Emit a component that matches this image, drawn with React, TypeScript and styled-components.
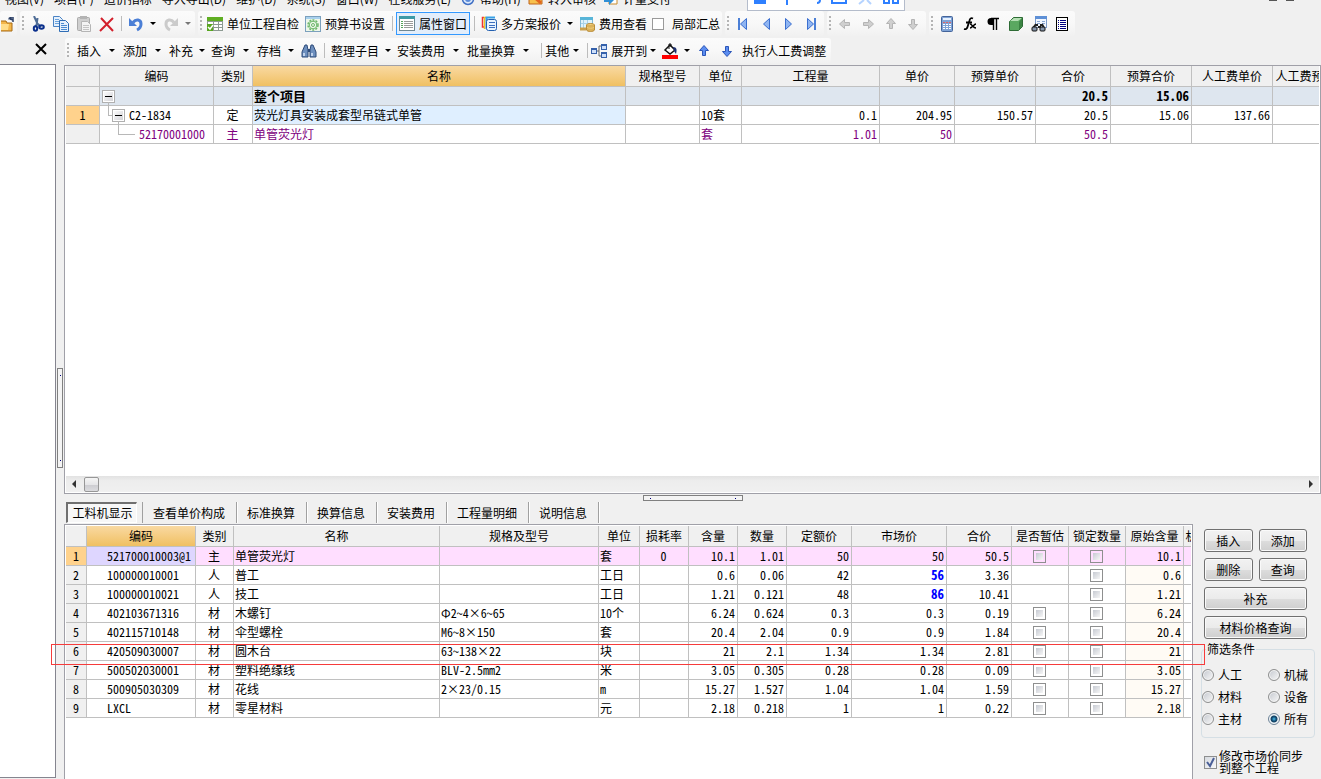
import React from 'react';
import styled, { createGlobalStyle, css } from 'styled-components';

const GlobalStyle = createGlobalStyle`
  *, *::before, *::after { box-sizing: border-box; }
  html, body { margin: 0; padding: 0; }
  body {
    background: #f0f0f0;
    color: #000;
    font-family: 'Noto Sans CJK SC', sans-serif;
    font-size: 12px;
    line-height: 16px;
    overflow: hidden;
  }
  button, input { font: inherit; color: inherit; margin: 0; }
`;

const gridFont = "'Noto Sans Mono CJK SC', 'Noto Sans CJK SC', monospace";

/* ---------- shell ---------- */

const Shell = styled.div`
  display: flex;
  flex-direction: column;
  height: 100vh;
  overflow: hidden;
`;

const MenuBar = styled.nav`
  display: flex;
  align-items: flex-end;
  flex: none;
  height: 11px;
  padding: 0 0 4px 5px;
  overflow: hidden;
  position: relative;
`;

const MenuItem = styled.button<{ $icon?: boolean }>`
  display: flex;
  align-items: center;
  gap: 5px;
  flex: none;
  height: 16px;
  padding: 0;
  margin-right: ${p => (p.$icon ? 7 : 10)}px;
  border: 0;
  background: none;
  white-space: nowrap;
`;

const WindowMarks = styled.div`
  position: absolute;
  top: 0;
  right: 27px;
  display: flex;
  gap: 9px;
  i { width: 8px; height: 1px; background: #555; }
`;

const FloatBar = styled.div`
  position: absolute;
  top: 0;
  left: 747px;
  display: flex;
  gap: 10px;
  width: 158px;
  height: 11px;
  padding-left: 5px;
  border: 1px solid #b4bccb;
  border-top: 0;
  background: #fff;
`;

const ToolRow = styled.div<{ $last?: boolean }>`
  display: flex;
  flex: none;
  gap: 3px;
  height: ${p => (p.$last ? 26 : 27)}px;
`;

const Group = styled.div`
  display: flex;
  align-items: center;
  flex: none;
  height: 25px;
  padding-right: 2px;
  border-radius: 3px;
  background: linear-gradient(#fbfbfb, #f8f8f8 50%, #f1f1f1);
`;

const Grip = styled.span`
  width: 6px;
  height: 15px;
  flex: none;
  background:
    linear-gradient(#b4b4b4, #b4b4b4) 2px 0 / 2px 2px no-repeat,
    linear-gradient(#b4b4b4, #b4b4b4) 2px 4px / 2px 2px no-repeat,
    linear-gradient(#b4b4b4, #b4b4b4) 2px 8px / 2px 2px no-repeat,
    linear-gradient(#b4b4b4, #b4b4b4) 2px 12px / 2px 2px no-repeat;
`;

const ToolButton = styled.button<{ $w?: number; $on?: boolean; $bare?: boolean }>`
  display: flex;
  align-items: center;
  justify-content: center;
  gap: 4px;
  flex: none;
  height: 23px;
  width: ${p => (p.$w ? `${p.$w}px` : 'auto')};
  padding: 0 ${p => (p.$w || p.$bare ? 0 : p.$on ? 2 : 3)}px;
  border: ${p => (p.$on ? '1px solid #3399ff' : '0')};
  background: ${p => (p.$on ? '#e3eefb' : 'none')};
  white-space: nowrap;
`;

const CaretButton = styled.button<{ $w: number; $dim?: boolean }>`
  display: flex;
  align-items: center;
  justify-content: center;
  flex: none;
  width: ${p => p.$w}px;
  height: 23px;
  padding: 0;
  border: 0;
  background: none;
  &::before {
    content: '';
    border: 3px solid transparent;
    border-top-color: ${p => (p.$dim ? '#777' : '#000')};
    border-bottom: 0;
  }
`;

const Separator = styled.span<{ $w: number }>`
  flex: none;
  width: ${p => p.$w}px;
  height: 15px;
  background: linear-gradient(#bcbcbc, #bcbcbc) center / 1px 100% no-repeat;
`;

const ToolCheck = styled.label`
  display: flex;
  align-items: center;
  gap: 8px;
  padding-left: 2px;
  white-space: nowrap;
  input {
    appearance: none;
    width: 12px;
    height: 12px;
    border: 1px solid #9a9a9a;
    background: #fff;
  }
`;

const DockHead = styled.div`
  display: flex;
  align-items: center;
  justify-content: flex-end;
  flex: none;
  width: 62px;
  padding: 0 15px 4px 0;
`;

const CloseButton = styled.button`
  display: flex;
  padding: 0;
  border: 0;
  background: none;
`;

const EditItems = styled.div`
  display: flex;
  align-items: center;
  padding-left: 6px;
`;

/* ---------- workspace ---------- */

const Workspace = styled.div`
  display: flex;
  flex: 1;
  min-height: 0;
`;

const SidePane = styled.aside`
  flex: none;
  width: 56px;
  margin-bottom: 1px;
  border: 1px solid #85858f;
  border-left: 0;
  background: #fff;
`;

const VSplitter = styled.div`
  display: flex;
  align-items: center;
  justify-content: center;
  flex: none;
  width: 8px;
  padding-bottom: 8px;
`;

const HSplitter = styled.div`
  display: flex;
  justify-content: center;
  padding-top: 1px;
`;

const Handle = styled.div<{ $vertical?: boolean }>`
  display: flex;
  flex-direction: ${p => (p.$vertical ? 'column' : 'row')};
  align-items: center;
  justify-content: space-between;
  width: ${p => (p.$vertical ? 6 : 100)}px;
  height: ${p => (p.$vertical ? 100 : 6)}px;
  padding: ${p => (p.$vertical ? '6px 0' : '0 6px')};
  border: 1px solid #808080;
  background: #f4f4f4;
  i { width: 1px; height: 1px; background: #000080; }
`;

const Main = styled.main`
  display: grid;
  grid-template-columns: minmax(0, 1fr);
  grid-template-rows: minmax(0, 429fr) 7px minmax(0, 278fr);
  flex: 1;
  min-width: 0;
  padding-top: 1px;
`;

const TopFrame = styled.section`
  display: flex;
  flex-direction: column;
  padding: 0 1px 1px 1px;
  border: 1px solid #a0a0a8;
  background: #fff;
`;

const TableClip = styled.div`
  flex: 1;
  min-height: 0;
  overflow: hidden;
`;

const ScrollBar = styled.div`
  display: flex;
  align-items: center;
  flex: none;
  height: 16px;
  padding: 0 5px;
  background: linear-gradient(#e2e2e2, #ededed 30%, #f0f0f0);
`;

const ScrollArrow = styled.button<{ $right?: boolean }>`
  width: 5px;
  height: 8px;
  padding: 0;
  border: 4px solid transparent;
  border-width: 4px 0 4px 4px;
  background: none;
  border-left-color: #333;
  ${p => !p.$right && css`
    border-width: 4px 4px 4px 0;
    border-right-color: #333;
  `}
`;

const ScrollThumb = styled.div`
  width: 15px;
  height: 15px;
  margin: 0 auto 0 8px;
  border: 1px solid #979797;
  border-radius: 2px;
  background: linear-gradient(#f5f5f5, #e6e6e8 50%, #ccccd0 51%, #dcdcdf);
`;

/* ---------- data tables ---------- */

const Table = styled.table<{ $width: number }>`
  table-layout: fixed;
  width: ${p => p.$width}px;
  border-collapse: separate;
  border-spacing: 0;
  font-family: ${gridFont};
`;

const HeadCell = styled.th<{ $on?: boolean }>`
  height: 21px;
  padding: 0;
  border-right: 1px solid #c0c0c0;
  border-bottom: 1px solid #c0c0c0;
  font-weight: 400;
  line-height: 16px;
  white-space: nowrap;
  overflow: hidden;
  background: ${p => (p.$on ? 'linear-gradient(#f9d9a2, #f0c062)' : '#f0f0f0')};
`;

const RowHead = styled.th<{ $on?: boolean }>`
  height: 19px;
  padding: 0;
  border-right: 1px solid #c0c0c0;
  border-bottom: 1px solid #c0c0c0;
  font-weight: 400;
  line-height: 16px;
  background: ${p => (p.$on ? '#ffd28c' : '#f0f0f0')};
`;

type Align = 'left' | 'center' | 'right';

const Cell = styled.td<{ $align?: Align; $bg?: string; $color?: string; $bold?: boolean }>`
  height: 19px;
  padding: 0 2px 0 1px;
  border-right: 1px solid #c0c0c0;
  border-bottom: 1px solid #c0c0c0;
  line-height: 16px;
  white-space: nowrap;
  text-align: ${p => p.$align ?? 'left'};
  background: ${p => p.$bg ?? '#fff'};
  color: ${p => p.$color ?? '#000'};
  font-size: ${p => (p.$bold ? 13 : 12)}px;
  font-weight: ${p => (p.$bold ? 700 : 400)};
`;

const TreeCell = styled.div<{ $indent: number }>`
  display: flex;
  align-items: center;
  position: relative;
  height: 18px;
  padding-left: ${p => p.$indent}px;
  gap: 4px;
`;

const Elbow = styled.i<{ $x: number; $w: number }>`
  position: absolute;
  left: ${p => p.$x}px;
  top: -4px;
  width: ${p => p.$w}px;
  height: 14px;
  border: 1px solid #b8b8b8;
  border-width: 0 0 1px 1px;
`;

const Toggle = styled.button`
  display: flex;
  align-items: center;
  justify-content: center;
  position: relative;
  width: 13px;
  height: 13px;
  padding: 0;
  border: 1px solid #b0b0b0;
  box-shadow: inset 0 0 0 1px #fff;
  background: linear-gradient(135deg, #fff, #cfcfd4);
  &::before {
    content: '';
    width: 7px;
    height: 1px;
    background: #000;
  }
`;

const GridCheck = styled.input.attrs({ type: 'checkbox' })`
  appearance: none;
  display: block;
  width: 13px;
  height: 13px;
  margin: 0 auto;
  border: 1px solid #8e8f8f;
  background: linear-gradient(135deg, #c6cad2, #f6f6f6) content-box #f4f4f4;
  padding: 2px;
`;

const CodeText = styled.span`
  padding-left: 19px;
`;

/* ---------- lower half ---------- */

const Lower = styled.section`
  display: flex;
  min-height: 0;
`;

const LowerLeft = styled.div`
  display: flex;
  flex-direction: column;
  flex: 1;
  min-width: 0;
`;

const Tabs = styled.div`
  display: flex;
  align-items: center;
  flex: none;
  height: 23px;
  padding-left: 2px;
`;

const Tab = styled.button<{ $on?: boolean }>`
  flex: none;
  height: 21px;
  padding: 0 11px 0 10px;
  border: 0;
  border-right: 1px solid #a0a0a0;
  box-shadow: 1px 0 0 #fff;
  background: none;
  font-family: ${gridFont};
  line-height: 18px;
  white-space: nowrap;
  ${p => p.$on && css`
    width: 71px;
    padding: 0 0 0 1px;
    border: 1px solid #fff;
    border-top: 2px solid #707070;
    border-left: 2px solid #707070;
    box-shadow: none;
    background: #f7f7f7;
    line-height: 16px;
  `}
`;

const TabGap = styled.span`
  width: 6px;
  height: 21px;
  border-right: 1px solid #a0a0a0;
`;

const LowerFrame = styled.div`
  position: relative;
  flex: 1;
  min-height: 0;
  border: 1px solid #a0a0a8;
  border-bottom: 0;
  padding: 1px 1px 0 1px;
  background: #fff;
`;

const LowerClip = styled.div`
  height: 100%;
  overflow: hidden;
`;

const Marker = styled.div`
  position: absolute;
  left: -14px;
  right: -13px;
  top: 119px;
  height: 21px;
  border: 1px solid #f63c3c;
  pointer-events: none;
  z-index: 2;
`;

const Actions = styled.aside`
  flex: none;
  width: 128px;
  padding: 28px 6px 0 8px;
  font-family: ${gridFont};
`;

const ButtonGrid = styled.div`
  display: grid;
  grid-template-columns: 1fr 1fr;
  gap: 6px;
  padding: 0 8px 0 3px;
`;

const ActionButton = styled.button<{ $wide?: boolean }>`
  grid-column: ${p => (p.$wide ? 'span 2' : 'auto')};
  height: 23px;
  padding: 0;
  border: 1px solid #707070;
  border-radius: 3px;
  box-shadow: inset 0 0 0 1px #fafafa;
  background: linear-gradient(#f2f2f2, #ebebeb 50%, #dddddd 51%, #cfcfcf);
  line-height: 16px;
`;

const Filter = styled.fieldset`
  display: grid;
  grid-template-columns: 66px 1fr;
  row-gap: 6px;
  min-width: 0;
  margin: 2px 0 0;
  padding: 10px 0;
  border: 1px solid #d5dfe5;
  border-radius: 4px;
  legend {
    padding: 0 1px;
    margin-left: 4px;
    line-height: 16px;
  }
`;

const Radio = styled.label`
  display: flex;
  align-items: center;
  gap: 4px;
  input {
    appearance: none;
    width: 12px;
    height: 12px;
    border: 1px solid #8e8f8f;
    border-radius: 50%;
    box-shadow: inset 0 0 0 1px #f4f4f4;
    background: linear-gradient(135deg, #c4c8cf, #f8f8f8);
  }
  input:checked {
    border-color: #6c8296;
    background: radial-gradient(circle at 50% 50%, #4cc3ee 0, #14547f 2px, #14405f 3px, #e6f2fa 4px);
  }
`;

const SyncLabel = styled.label`
  display: flex;
  align-items: center;
  gap: 2px;
  margin-top: 12px;
  padding-left: 3px;
  line-height: 12px;
`;

const CheckWrap = styled.span`
  display: grid;
  flex: none;
  width: 13px;
  height: 13px;
  > * { grid-area: 1 / 1; }
`;

const SyncCheck = styled.input.attrs({ type: 'checkbox' })`
  appearance: none;
  width: 13px;
  height: 13px;
  border: 1px solid #8e8f8f;
  background: linear-gradient(135deg, #d6dae0, #f8f8f8);
`;

/* ---------- icons ---------- */

const Svg = styled.svg`
  display: block;
  flex: none;
`;

const Icon = ({ children, w = 16 }: { children: React.ReactNode; w?: number }) => (
  <Svg width={w} height="16" viewBox={`0 0 ${w} 16`} fill="none" aria-hidden="true">{children}</Svg>
);

const FolderIcon = () => (
  <Icon w={13}>
    <path d="M-2 5h7l1 2h5v8h-13z" fill="#f3b64a" stroke="#a86a12" />
    <path d="M-2 8h10l-1 6h-9z" fill="#ffdd8a" />
    <path d="M8 3.500c0-2 2-2 3-1.500M12 1v5M9 3l3 1" stroke="#2b3f66" strokeWidth="1.500" />
  </Icon>
);
const CutIcon = () => (
  <Icon>
    <path d="M4 0l4 9M7.500 2l-1 8M8 8l3 3M7 8l-2 3" stroke="#4f6d96" strokeWidth="2" />
    <ellipse cx="5.500" cy="12.500" rx="1.700" ry="2.300" stroke="#0a2f8c" strokeWidth="2" />
    <ellipse cx="11.500" cy="11" rx="2.300" ry="1.700" stroke="#0a2f8c" strokeWidth="2" />
  </Icon>
);
const CopyIcon = () => (
  <Icon>
    <path d="M.5.5h6l3 3v7h-9z" fill="#e5f0fc" stroke="#4a83c4" />
    <path d="M2 3.500h4M2 5.500h4M2 7.500h4" stroke="#6aa2dc" />
    <path d="M6.500 4.500h6l3 3v8h-9z" fill="#e5f0fc" stroke="#2f6db5" />
    <path d="M8 7.500h3M8 9.500h6M8 11.500h6M8 13.500h6" stroke="#4a8ad0" />
  </Icon>
);
const PasteIcon = () => (
  <Icon>
    <rect x="1.500" y="1.500" width="12" height="13" rx="1" fill="#cfcfcf" stroke="#ababab" />
    <rect x="4" y="0" width="7" height="3" fill="#b4b4b4" />
    <path d="M5.500 5.500h6l3 3v7h-9z" fill="#f3f3f3" stroke="#b5b5b5" />
    <path d="M7 9.500h6M7 11.500h6M7 13.500h6" stroke="#c4c4c4" />
  </Icon>
);
const DeleteIcon = () => (
  <Icon><path d="M2 2l12 13M14 2l-13 13" stroke="#d3202c" strokeWidth="2" /></Icon>
);
const UndoIcon = ({ dim }: { dim?: boolean }) => (
  <Icon>
    <g transform={dim ? 'translate(16 0) scale(-1 1)' : undefined}>
      <path d="M5 6.500c3-4 8-3 8 1.500 0 3-2 5-4 6" stroke={dim ? '#cbcbcb' : '#4b7fd6'} strokeWidth="3" />
      <path d="M1 2v8h8z" fill={dim ? '#cbcbcb' : '#4b7fd6'} />
    </g>
  </Icon>
);
const SheetCheckIcon = () => (
  <Icon>
    <rect x="0" y="1" width="16" height="14" fill="#8d9a92" />
    <rect x="0" y="1" width="16" height="4" fill="#5fae22" />
    <path d="M7 6h4v2H7zM12 6h3v2h-3zM7 9h4v2H7zM12 9h3v2h-3zM7 12h4v2H7zM12 12h3v2h-3zM1 6h5v2H1z" fill="#fff" />
    <rect x="0" y="8" width="6" height="7" fill="#57a51e" />
    <path d="M1 11l2 2 3-4" stroke="#fff" strokeWidth="1.500" />
  </Icon>
);
const GearSheetIcon = () => (
  <Icon>
    <rect x=".5" y=".5" width="15" height="15" fill="#eef7ea" stroke="#7ba0bd" />
    <path d="M1 2h14" stroke="#a9d1ee" strokeWidth="2" />
    <circle cx="8" cy="9" r="5" stroke="#6db76a" strokeWidth="1.500" strokeDasharray="2 1.200" />
    <circle cx="8" cy="9" r="3.800" stroke="#6db76a" />
    <circle cx="8" cy="9" r="1.500" stroke="#6db76a" />
  </Icon>
);
const PanelIcon = () => (
  <Icon>
    <rect x=".5" y=".5" width="15" height="14" fill="#fff" stroke="#6f8792" />
    <rect x="0" y="0" width="16" height="3" fill="#3d9aa6" />
    <path d="M2 5.500h2M2 7.500h2M2 9.500h2M2 11.500h2" stroke="#58a55b" />
    <path d="M5 5.500h9M5 7.500h9M5 9.500h9M5 11.500h9" stroke="#9a9a9a" />
  </Icon>
);
const PlansIcon = () => (
  <Icon>
    <path d="M3 1.500H1.500V11H3" stroke="#e33" strokeWidth="1.500" />
    <path d="M5 1.500H3.500V13" stroke="#f2c321" strokeWidth="1.500" />
    <path d="M14 1.500H5.500V13" stroke="#37a0e6" strokeWidth="2" />
    <rect x="5.500" y="3.500" width="10" height="11" rx="2" fill="#e8f4ff" stroke="#2460b0" />
    <path d="M8 6.500h6M8 9.500h6M8 11.500h6" stroke="#3b6fc0" />
  </Icon>
);
const CostIcon = () => (
  <Icon>
    <rect x="1.500" y="1.500" width="12" height="11" fill="#dff2fb" stroke="#83b9d6" />
    <rect x="1" y="1" width="13" height="3" fill="#58b5d8" />
    <path d="M4.500 4v8M8.500 4v8M2 7.500h11" stroke="#a8d2e8" />
    <ellipse cx="11.500" cy="9" rx="4" ry="1.500" fill="#f1cd7a" stroke="#b98d3b" />
    <path d="M7.500 9v5c1 2 7 2 8 0V9" fill="#dbb15a" stroke="#b98d3b" />
    <path d="M8 11.500c2 1 5 1 7 0" stroke="#f1cd7a" />
    <path d="M1 13h6" stroke="#caa04d" strokeWidth="3" />
  </Icon>
);
const NavIcon = ({ left, bar }: { left?: boolean; bar?: boolean }) => (
  <Icon>
    <g transform={left ? 'translate(16 0) scale(-1 1)' : undefined}>
      <path d="M4.500 2.500v11l6-5.500z" fill="#8fb5f2" stroke="#3b6fd0" />
      {bar && <path d="M12 2v12" stroke="#4b7fd6" strokeWidth="2" />}
    </g>
  </Icon>
);
const ArrowIcon = ({ turn, blue }: { turn: number; blue?: boolean }) => (
  <Icon>
    <path
      transform={`rotate(${turn} 8 8)`}
      d="M2.500 8L7.500 3.500v3h5v3h-5v3z"
      fill={blue ? '#5b8df0' : '#cfcfcf'}
      stroke={blue ? '#2c56b8' : '#b4b4b4'}
    />
  </Icon>
);
const CalcIcon = () => (
  <Icon>
    <rect x="2.500" y=".5" width="11" height="15" rx="1" fill="#7fa3d6" stroke="#44649a" />
    <rect x="4" y="2" width="8" height="2" fill="#e6f1ff" />
    <path d="M4 6.500h2M7 6.500h2M10 6.500h2" stroke="#d66" />
    <path d="M4 8.500h2M7 8.500h2M10 8.500h2M4 10.500h2M7 10.500h2M10 10.500h2M4 12.500h2M7 12.500h2M10 12.500h2" stroke="#fff" />
  </Icon>
);
const FxIcon = () => (
  <Icon>
    <path d="M11 2.500c-2-1-3 0-3.500 2L5.500 11c-.5 2-2 2.500-3.500 2M4 6.500h6" stroke="#000" strokeWidth="1.800" />
    <path d="M8 8c2 0 3 4 6 4M14 8c-2 0-4 4-6 4" stroke="#000" strokeWidth="1.500" />
  </Icon>
);
const PilcrowIcon = () => (
  <Icon>
    <path d="M8 2H6a3.500 3.500 0 0 0 0 7h2z" fill="#000" />
    <path d="M6 2.500h8M8.500 2v12M11.500 2v12" stroke="#000" strokeWidth="1.400" />
  </Icon>
);
const CubeIcon = () => (
  <Icon>
    <path d="M1.500 5.500l4-4h9v9l-4 4h-9z" fill="#5aa860" stroke="#2e6b35" />
    <path d="M2 5l4-3h8l-4 3z" fill="#b6e0b5" />
    <path d="M11 6l3-4v8l-3 4z" fill="#3b8443" />
  </Icon>
);
const FindSheetIcon = () => (
  <Icon>
    <rect x="4.500" y=".5" width="11" height="11" fill="#f2f7ff" stroke="#7d9cc9" />
    <rect x="4" y="0" width="12" height="3" fill="#5e90d6" />
    <path d="M6 5.500h3M11 5.500h3M6 7.500h3M11 7.500h3" stroke="#8aa7d2" />
    <path d="M5 8l-3 4M7 11h3M11 8l2 4M5 9h2M9 9h2" stroke="#222" strokeWidth="1.800" />
    <rect x="1" y="11" width="5" height="4" rx="1" fill="#8797ad" stroke="#111" />
    <rect x="9" y="11" width="5" height="4" rx="1" fill="#8797ad" stroke="#111" />
  </Icon>
);
const ListIcon = () => (
  <Icon>
    <rect x="2.500" y="1.500" width="11" height="13" fill="#fff" stroke="#000" />
    <path d="M4 4.500h1M6 4.500h6M4 6.500h1M6 6.500h6M4 8.500h1M6 8.500h6M4 10.500h1M6 10.500h6M4 12.500h1M6 12.500h6" stroke="#000080" />
  </Icon>
);
const BinocularsIcon = () => (
  <Icon>
    <path d="M4 2h2l1 5v7H1V9zM10 2h2l3 7v5H9V7z" fill="#6d8fbe" stroke="#2d4a78" />
    <path d="M7 6h2v3H7z" fill="#2d4a78" />
    <path d="M3 10v3M11 10v3" stroke="#dce9fa" strokeWidth="1.500" />
  </Icon>
);
const ExpandIcon = () => (
  <Icon>
    <path d="M5 8h3M8 3v10M8 3h2M8 13h2" stroke="#666" />
    <rect x=".5" y="5.500" width="5" height="5" fill="#cfe0fa" stroke="#3561ab" />
    <rect x="10.500" y="1.500" width="5" height="5" fill="#cfe0fa" stroke="#3561ab" />
    <rect x="10.500" y="9.500" width="5" height="5" fill="#cfe0fa" stroke="#3561ab" />
    <path d="M1 6.500h4M11 2.500h4M11 10.500h4" stroke="#3561ab" />
  </Icon>
);
const FillIcon = () => (
  <Icon>
    <path d="M3 7l5-5 5 5-5 4z" fill="#fff" stroke="#111" strokeWidth="1.500" />
    <path d="M7 6V1h2v3" stroke="#111" />
    <path d="M11 4c4 0 4 3 3 7l-2-3z" fill="#1c2f6e" />
    <rect x="0" y="12" width="16" height="4" fill="#f00" />
  </Icon>
);
const CloseIcon = () => (
  <Icon w={12}><path d="M1 3l10 10M11 3L1 13" stroke="#000" strokeWidth="2" /></Icon>
);
const HelpIcon = () => (
  <Icon w={14}><circle cx="7" cy="8" r="5.500" fill="#dce9fb" stroke="#3f6fc4" strokeWidth="1.500" /><circle cx="7" cy="8" r="3" fill="#5a8ad8" /></Icon>
);
const ImportIcon = () => (
  <Icon w={15}><path d="M1 4h13v9H1z" fill="#f7c04c" stroke="#c0641a" /><path d="M6 6l7 6" stroke="#e2641e" strokeWidth="3" /></Icon>
);
const PayIcon = () => (
  <Icon w={15}><path d="M6 4h8v9H6z" fill="#fff" stroke="#c88a2a" /><path d="M1 6h5v-3l5 6-5 5v-3H1z" fill="#2f8fd6" /></Icon>
);
const TickIcon = () => (
  <Svg width="13" height="13" viewBox="0 0 13 13" fill="none" aria-hidden="true" pointerEvents="none">
    <path d="M3 6l3 4 4-8" stroke="#4a5f97" strokeWidth="2" />
  </Svg>
);
const FloatIcons = () => (
  <Svg width="146" height="7" viewBox="0 0 146 7" fill="none" stroke="#2f80ff" strokeWidth="2" aria-hidden="true">
    <path d="M2 0h10v3H2z" fill="#2f80ff" />
    <path d="M34 0v5M67 0c0 2-1 3-3 3" />
    <path d="M79 0v3h14V0" />
    <path d="M106 4l5-4M114 0l4 4" stroke="#b5d3ff" />
    <path d="M131 0v3h5V0M140 0v3h5V0" />
  </Svg>
);

/* ---------- data ---------- */

const menus: [string, React.ReactNode?][] = [
  ['视图(V)'], ['项目(P)'], ['造价指标'], ['导入导出(D)'], ['维护(D)'], ['系统(S)'], ['窗口(W)'], ['在线服务(L)'],
  ['帮助(H)', <HelpIcon />], ['转入审核', <ImportIcon />], ['计量支付', <PayIcon />],
];

const topColumns: [string, number][] = [
  ['', 34], ['编码', 114], ['类别', 39], ['名称', 373], ['规格型号', 74], ['单位', 42], ['工程量', 138], ['单价', 75],
  ['预算单价', 81], ['合价', 75], ['预算合价', 81], ['人工费单价', 81], ['人工费预算价', 78],
];

const lowColumns: [string, number][] = [
  ['', 21], ['编码', 109], ['类别', 38], ['名称', 206], ['规格及型号', 159], ['单位', 41], ['损耗率', 49], ['含量', 49],
  ['数量', 49], ['定额价', 65], ['市场价', 95], ['合价', 65], ['是否暂估', 57], ['锁定数量', 57], ['原始含量', 58], ['机械', 28],
];

interface Material {
  code: string; kind: string; name: string; spec: string; unit: string; loss?: string;
  content: string; qty: string; base: string; market: string; total: string; priced?: boolean; estimate: boolean;
}

const materials: Material[] = [
  { code: '521700010003@1', kind: '主', name: '单管荧光灯', spec: '', unit: '套', loss: '0', content: '10.1', qty: '1.01', base: '50', market: '50', total: '50.5', estimate: true },
  { code: '100000010001', kind: '人', name: '普工', spec: '', unit: '工日', content: '0.6', qty: '0.06', base: '42', market: '56', total: '3.36', priced: true, estimate: false },
  { code: '100000010021', kind: '人', name: '技工', spec: '', unit: '工日', content: '1.21', qty: '0.121', base: '48', market: '86', total: '10.41', priced: true, estimate: false },
  { code: '402103671316', kind: '材', name: '木螺钉', spec: 'Φ2~4×6~65', unit: '10个', content: '6.24', qty: '0.624', base: '0.3', market: '0.3', total: '0.19', estimate: true },
  { code: '402115710148', kind: '材', name: '伞型螺栓', spec: 'M6~8×150', unit: '套', content: '20.4', qty: '2.04', base: '0.9', market: '0.9', total: '1.84', estimate: true },
  { code: '420509030007', kind: '材', name: '圆木台', spec: '63~138×22', unit: '块', content: '21', qty: '2.1', base: '1.34', market: '1.34', total: '2.81', estimate: true },
  { code: '500502030001', kind: '材', name: '塑料绝缘线', spec: 'BLV-2.5mm2', unit: '米', content: '3.05', qty: '0.305', base: '0.28', market: '0.28', total: '0.09', estimate: true },
  { code: '500905030309', kind: '材', name: '花线', spec: '2×23/0.15', unit: 'm', content: '15.27', qty: '1.527', base: '1.04', market: '1.04', total: '1.59', estimate: true },
  { code: 'LXCL', kind: '材', name: '零星材料', spec: '', unit: '元', content: '2.18', qty: '0.218', base: '1', market: '1', total: '0.22', estimate: true },
];

const tabs = ['工料机显示', '查看单价构成', '标准换算', '换算信息', '安装费用', '工程量明细', '说明信息'];

const sum = (columns: [string, number][]) => columns.reduce((total, [, w]) => total + w, 0);

const Columns = ({ items }: { items: [string, number][] }) => (
  <colgroup>{items.map(([label, w], i) => <col key={label + i} style={{ width: w }} />)}</colgroup>
);

const Head = ({ items, active }: { items: [string, number][]; active: string }) => (
  <thead>
    <tr>{items.map(([label], i) => <HeadCell key={label + i} $on={label === active}>{label}</HeadCell>)}</tr>
  </thead>
);

/* ---------- sections ---------- */

const MainToolbar = () => (
  <ToolRow>
    <Group><ToolButton $w={15} aria-label="打开"><FolderIcon /></ToolButton></Group>
    <Group>
      <Grip />
      <ToolButton $w={23} aria-label="剪切"><CutIcon /></ToolButton>
      <ToolButton $w={23} aria-label="复制"><CopyIcon /></ToolButton>
      <ToolButton $w={23} aria-label="粘贴"><PasteIcon /></ToolButton>
      <ToolButton $w={23} aria-label="删除"><DeleteIcon /></ToolButton>
      <Separator $w={6} />
      <ToolButton $w={23} aria-label="撤销"><UndoIcon /></ToolButton>
      <CaretButton $w={12} aria-label="撤销列表" />
      <ToolButton $w={23} aria-label="恢复"><UndoIcon dim /></ToolButton>
      <CaretButton $w={11} $dim aria-label="恢复列表" />
    </Group>
    <Group>
      <Grip />
      <ToolButton><SheetCheckIcon />单位工程自检</ToolButton>
      <ToolButton><GearSheetIcon />预算书设置</ToolButton>
      <Separator $w={8} />
      <ToolButton $on><PanelIcon />属性窗口</ToolButton>
      <Separator $w={8} />
      <ToolButton><PlansIcon />多方案报价</ToolButton>
      <CaretButton $w={12} aria-label="多方案报价列表" />
      <ToolButton><CostIcon />费用查看</ToolButton>
      <ToolCheck><input type="checkbox" />局部汇总</ToolCheck>
    </Group>
    <Group>
      <Grip />
      <ToolButton $w={23} aria-label="第一条"><NavIcon left bar /></ToolButton>
      <ToolButton $w={23} aria-label="上一条"><NavIcon left /></ToolButton>
      <ToolButton $w={23} aria-label="下一条"><NavIcon /></ToolButton>
      <ToolButton $w={22} aria-label="最后一条"><NavIcon bar /></ToolButton>
    </Group>
    <Group>
      <Grip />
      <ToolButton $w={23} aria-label="左移"><ArrowIcon turn={0} /></ToolButton>
      <ToolButton $w={23} aria-label="右移"><ArrowIcon turn={180} /></ToolButton>
      <ToolButton $w={23} aria-label="上移"><ArrowIcon turn={90} /></ToolButton>
      <ToolButton $w={22} aria-label="下移"><ArrowIcon turn={270} /></ToolButton>
    </Group>
    <Group>
      <Grip />
      <ToolButton $w={23} aria-label="计算器"><CalcIcon /></ToolButton>
      <ToolButton $w={23} aria-label="函数"><FxIcon /></ToolButton>
      <ToolButton $w={23} aria-label="特殊符号"><PilcrowIcon /></ToolButton>
      <ToolButton $w={23} aria-label="图元"><CubeIcon /></ToolButton>
      <ToolButton $w={23} aria-label="查找表"><FindSheetIcon /></ToolButton>
      <ToolButton $w={23} aria-label="清单"><ListIcon /></ToolButton>
    </Group>
  </ToolRow>
);

const Drop = ({ label, w }: { label: string; w: number }) => (
  <>
    <ToolButton $bare>{label}</ToolButton>
    <CaretButton $w={w} aria-label={`${label}列表`} />
  </>
);

const EditToolbar = () => (
  <ToolRow $last>
    <DockHead><CloseButton aria-label="关闭"><CloseIcon /></CloseButton></DockHead>
    <Group>
      <Grip />
      <EditItems>
        <Drop label="插入" w={22} />
        <Drop label="添加" w={22} />
        <Drop label="补充" w={18} />
        <Drop label="查询" w={22} />
        <Drop label="存档" w={20} />
        <ToolButton $w={16} aria-label="查找"><BinocularsIcon /></ToolButton>
        <Separator $w={14} />
        <Drop label="整理子目" w={18} />
        <Drop label="安装费用" w={22} />
        <Drop label="批量换算" w={22} />
        <Separator $w={8} />
        <Drop label="其他" w={14} />
        <Separator $w={8} />
        <ToolButton $bare><ExpandIcon />展开到</ToolButton>
        <CaretButton $w={12} aria-label="展开到列表" />
        <ToolButton $w={22} aria-label="填充颜色"><FillIcon /></ToolButton>
        <CaretButton $w={12} aria-label="填充颜色列表" />
        <ToolButton $w={22} aria-label="上移"><ArrowIcon turn={90} blue /></ToolButton>
        <ToolButton $w={24} aria-label="下移"><ArrowIcon turn={270} blue /></ToolButton>
        <ToolButton>执行人工费调整</ToolButton>
      </EditItems>
    </Group>
  </ToolRow>
);

const EstimateTable = () => {
  const band = '#dee6ef';
  const purple = '#800080';
  return (
    <Table $width={sum(topColumns)}>
      <Columns items={topColumns} />
      <Head items={topColumns} active="名称" />
      <tbody>
        <tr>
          <RowHead />
          <Cell $bg={band}><TreeCell $indent={1}><Toggle aria-label="折叠整个项目" /></TreeCell></Cell>
          <Cell $bg={band} />
          <Cell $bg={band} $bold>整个项目</Cell>
          {['', '', '', '', '', '20.5', '15.06', '', ''].map((v, i) => (
            <Cell key={i} $bg={band} $bold $align="right">{v}</Cell>
          ))}
        </tr>
        <tr>
          <RowHead $on>1</RowHead>
          <Cell><TreeCell $indent={11}><Elbow $x={7} $w={5} /><Toggle aria-label="折叠C2-1834" />C2-1834</TreeCell></Cell>
          <Cell $align="center">定</Cell>
          <Cell $bg="#dfefff">荧光灯具安装成套型吊链式单管</Cell>
          <Cell />
          <Cell>10套</Cell>
          {['0.1', '204.95', '150.57', '20.5', '15.06', '137.66', ''].map((v, i) => (
            <Cell key={i} $align="right">{v}</Cell>
          ))}
        </tr>
        <tr>
          <RowHead />
          <Cell $color={purple}><TreeCell $indent={38}><Elbow $x={17} $w={17} />52170001000</TreeCell></Cell>
          <Cell $align="center" $color={purple}>主</Cell>
          <Cell $color={purple}>单管荧光灯</Cell>
          <Cell />
          <Cell $color={purple}>套</Cell>
          {['1.01', '50', '', '50.5', '', '', ''].map((v, i) => (
            <Cell key={i} $align="right" $color={purple}>{v}</Cell>
          ))}
        </tr>
      </tbody>
    </Table>
  );
};

const MaterialTable = () => (
  <Table $width={sum(lowColumns)}>
    <Columns items={lowColumns} />
    <Head items={lowColumns} active="编码" />
    <tbody>
      {materials.map((m, i) => {
        const bg = i === 0 ? '#ffdeff' : '#fff';
        return (
          <tr key={m.code}>
            <RowHead $on={i === 0}>{i + 1}</RowHead>
            <Cell $bg={i === 0 ? '#ded6ff' : bg}><CodeText>{m.code}</CodeText></Cell>
            <Cell $bg={bg} $align="center">{m.kind}</Cell>
            <Cell $bg={bg}>{m.name}</Cell>
            <Cell $bg={bg}>{m.spec}</Cell>
            <Cell $bg={bg}>{m.unit}</Cell>
            <Cell $bg={bg} $align="center">{m.loss}</Cell>
            <Cell $bg={bg} $align="right">{m.content}</Cell>
            <Cell $bg={bg} $align="right">{m.qty}</Cell>
            <Cell $bg={bg} $align="right">{m.base}</Cell>
            <Cell $bg={bg} $align="right" $bold={m.priced} $color={m.priced ? '#0000ff' : undefined}>{m.market}</Cell>
            <Cell $bg={bg} $align="right">{m.total}</Cell>
            <Cell $bg={bg}>{m.estimate && <GridCheck aria-label={`${m.name}是否暂估`} />}</Cell>
            <Cell $bg={bg}><GridCheck aria-label={`${m.name}锁定数量`} /></Cell>
            <Cell $bg={i === 0 ? bg : '#fffbf5'} $align="right">{m.content}</Cell>
            <Cell $bg={bg} />
          </tr>
        );
      })}
    </tbody>
  </Table>
);

export default function App() {
  return (
    <>
      <GlobalStyle />
      <Shell>
        <MenuBar>
          {menus.map(([label, icon]) => <MenuItem key={label} $icon={!!icon}>{icon}{label}</MenuItem>)}
          <FloatBar><FloatIcons /></FloatBar>
          <WindowMarks><i /><i /></WindowMarks>
        </MenuBar>
        <MainToolbar />
        <EditToolbar />
        <Workspace>
          <SidePane />
          <VSplitter><Handle $vertical><i /><i /></Handle></VSplitter>
          <Main>
            <TopFrame>
              <TableClip><EstimateTable /></TableClip>
              <ScrollBar>
                <ScrollArrow aria-label="向左滚动" />
                <ScrollThumb />
                <ScrollArrow $right aria-label="向右滚动" />
              </ScrollBar>
            </TopFrame>
            <HSplitter><Handle><i /><i /></Handle></HSplitter>
            <Lower>
              <LowerLeft>
                <Tabs role="tablist">
                  {tabs.map((label, i) => (
                    <React.Fragment key={label}>
                      <Tab role="tab" aria-selected={i === 0} $on={i === 0}>{label}</Tab>
                      {i === 0 && <TabGap />}
                    </React.Fragment>
                  ))}
                </Tabs>
                <LowerFrame>
                  <LowerClip><MaterialTable /></LowerClip>
                  <Marker />
                </LowerFrame>
              </LowerLeft>
              <Actions>
                <ButtonGrid>
                  <ActionButton>插入</ActionButton>
                  <ActionButton>添加</ActionButton>
                  <ActionButton>删除</ActionButton>
                  <ActionButton>查询</ActionButton>
                  <ActionButton $wide>补充</ActionButton>
                  <ActionButton $wide>材料价格查询</ActionButton>
                </ButtonGrid>
                <Filter>
                  <legend>筛选条件</legend>
                  {['人工', '机械', '材料', '设备', '主材', '所有'].map(label => (
                    <Radio key={label}>
                      <input type="radio" name="filter" defaultChecked={label === '所有'} />
                      {label}
                    </Radio>
                  ))}
                </Filter>
                <SyncLabel>
                  <CheckWrap><SyncCheck defaultChecked /><TickIcon /></CheckWrap>
                  <span>修改市场价同步<br />到整个工程</span>
                </SyncLabel>
              </Actions>
            </Lower>
          </Main>
        </Workspace>
      </Shell>
    </>
  );
}
